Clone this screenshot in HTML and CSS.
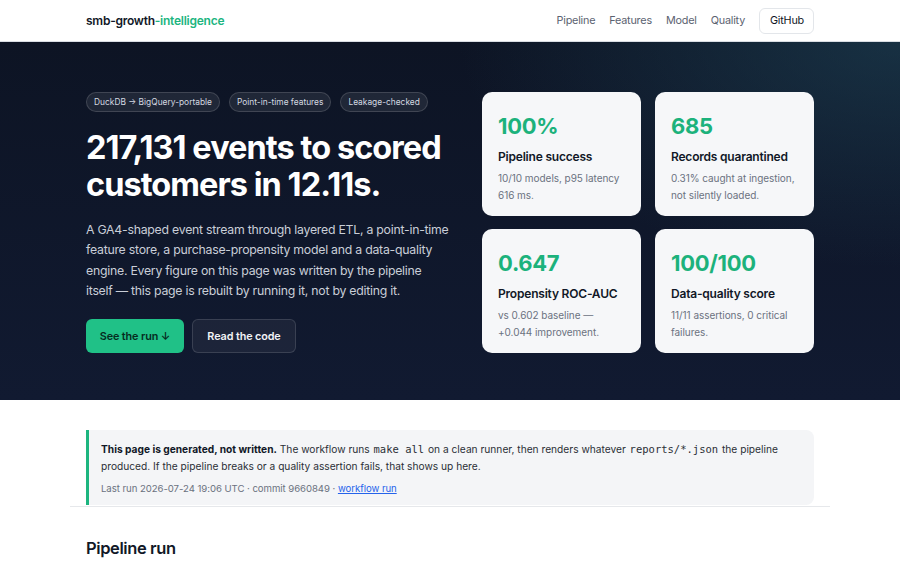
FILE: index.html
```html
<!DOCTYPE html>
<html lang="en">
<head>
<meta charset="utf-8">
<title>smb-growth-intelligence</title>
<link rel="stylesheet" href="styles.css">
</head>
<body>
<header class="topbar">
  <div class="wrap topbar-inner">
    <a class="logo" href="#">smb-growth<span class="accent">-intelligence</span></a>
    <nav class="nav">
      <a href="#">Pipeline</a>
      <a href="#">Features</a>
      <a href="#">Model</a>
      <a href="#">Quality</a>
      <a class="gh" href="#">GitHub</a>
    </nav>
  </div>
</header>

<section class="hero">
  <div class="wrap hero-inner">
    <div class="hero-left">
      <div class="pills">
        <span class="pill">DuckDB → BigQuery-portable</span>
        <span class="pill">Point-in-time features</span>
        <span class="pill">Leakage-checked</span>
      </div>
      <h1 class="title">217,131 events to scored customers in 12.11s.</h1>
      <p class="lead">A GA4-shaped event stream through layered ETL, a <span class="nb">point-in-time</span> feature store, a purchase-propensity model and a <span class="nb">data-quality</span> engine. Every figure on this page was written by the pipeline <span class="nb">itself —</span> this page is rebuilt by running it, not by editing it.</p>
      <div class="actions">
        <a class="btn btn-primary" href="#">See the run ↓</a>
        <a class="btn btn-ghost" href="#">Read the code</a>
      </div>
    </div>
    <div class="cards">
      <div class="card">
        <div class="num">100%</div>
        <div class="card-title">Pipeline success</div>
        <div class="card-desc">10/10 models, p95 latency 616 ms.</div>
      </div>
      <div class="card">
        <div class="num">685</div>
        <div class="card-title">Records quarantined</div>
        <div class="card-desc">0.31% caught at ingestion, not silently loaded.</div>
      </div>
      <div class="card">
        <div class="num">0.647</div>
        <div class="card-title">Propensity ROC-AUC</div>
        <div class="card-desc">vs 0.602 baseline — +0.044 improvement.</div>
      </div>
      <div class="card">
        <div class="num">100/100</div>
        <div class="card-title">Data-quality score</div>
        <div class="card-desc">11/11 assertions, 0 critical failures.</div>
      </div>
    </div>
  </div>
</section>

<section class="notice-sec">
  <div class="notice">
    <p class="notice-text"><strong>This page is generated, not written.</strong> The workflow runs <code>make all</code> on a clean runner, then renders whatever <code>reports/*.json</code> the pipeline produced. If the pipeline breaks or a quality assertion fails, that shows up here.</p>
    <p class="notice-meta">Last run 2026-07-24 19:06 UTC · commit 9660849 · <a href="#">workflow run</a></p>
  </div>
</section>

<section class="wrap run">
  <h2>Pipeline run</h2>
</section>
</body>
</html>
```

FILE: styles.css
```css
* { box-sizing: border-box; }
html, body { margin: 0; padding: 0; }
body {
  font-family: Inter, "Noto Sans", "Liberation Sans", sans-serif;
  color: #111827;
  background: #ffffff;
  -webkit-font-smoothing: antialiased;
}
a { text-decoration: none; color: inherit; }

.wrap {
  max-width: 760px;
  margin: 0 auto;
  padding: 0 16px;
}

/* header */
.topbar {
  height: 42px;
  border-bottom: 1px solid #d9dde3;
  background: #fff;
}
.topbar-inner {
  height: 41px;
  display: flex;
  align-items: center;
  justify-content: space-between;
}
.logo {
  font-size: 12px;
  font-weight: 600;
  letter-spacing: -0.25px;
  color: #111827;
}
.accent { color: #1cb57f; }
.nav {
  display: flex;
  align-items: center;
  gap: 14px;
  font-size: 10.8px;
  letter-spacing: -0.2px;
  color: #5b6270;
}
.gh {
  color: #111827;
  border: 1px solid #e3e6ea;
  border-radius: 6px;
  padding: 0 10px;
  height: 26px;
  line-height: 24px;
  width: 55px;
  text-align: center;
}

/* hero */
.hero {
  background:
    radial-gradient(ellipse 70% 90% at 100% 0%, rgba(32, 72, 92, 0.55), rgba(32, 72, 92, 0) 70%),
    linear-gradient(180deg, #0d1424 0%, #111a31 100%);
  color: #fff;
  height: 358px;
}
.hero-inner {
  height: 100%;
  display: flex;
  align-items: center;
  justify-content: space-between;
  gap: 30px;
  padding-top: 2px;
}
.hero-left { width: 372px; }
.nb { white-space: nowrap; }
.pills {
  display: flex;
  gap: 9px;
  margin-bottom: 17px;
  margin-top: 1px;
}
.pill {
  white-space: nowrap;
  font-size: 8.4px;
  line-height: 18px;
  padding: 0 7px;
  border-radius: 999px;
  background: rgba(255, 255, 255, 0.08);
  border: 1px solid rgba(255, 255, 255, 0.14);
  color: #d4d9e1;
}
.title {
  margin: 0 0 17px;
  font-size: 32.5px;
  line-height: 37px;
  font-weight: 700;
  letter-spacing: -0.95px;
  color: #fff;
}
.lead {
  margin: 0 0 18px;
  font-size: 12.3px;
  line-height: 20.4px;
  letter-spacing: -0.25px;
  color: #c9ced8;
}
.actions { display: flex; gap: 8px; }
.btn {
  display: inline-flex;
  align-items: center;
  justify-content: center;
  height: 34px;
  border-radius: 6px;
  font-size: 10.8px;
  font-weight: 600;
  letter-spacing: -0.1px;
}
.btn-primary {
  width: 98px;
  background: #20c187;
  color: #062c1f;
}
.btn-ghost {
  width: 104px;
  background: rgba(255, 255, 255, 0.05);
  border: 1px solid rgba(255, 255, 255, 0.13);
  color: #f1f3f6;
}

.cards {
  display: grid;
  grid-template-columns: 159px 159px;
  gap: 13px 14px;
}
.card {
  background: #f6f7f9;
  border-radius: 10px;
  height: 124px;
  padding: 21px 16px 0;
  color: #111827;
}
.num {
  font-size: 22px;
  line-height: 26px;
  font-weight: 700;
  color: #1cb27c;
  letter-spacing: -0.3px;
  margin-bottom: 10px;
}
.card-title {
  font-size: 12px;
  font-weight: 600;
  line-height: 16px;
  letter-spacing: -0.2px;
  white-space: nowrap;
  margin-bottom: 5px;
}
.card-desc {
  font-size: 10px;
  line-height: 17px;
  letter-spacing: -0.05px;
  color: #6b7280;
}

/* notice */
.notice-sec {
  max-width: 760px;
  margin: 30px auto 0;
  padding: 0 16px 1px;
  border-bottom: 1px solid #e6e8eb;
}
.notice {
  background: #f4f5f7;
  border-left: 3px solid #1cb57f;
  border-radius: 0 8px 8px 0;
  padding: 11px 14px 10px 12px;
  height: 75px;
}
.notice-text {
  margin: 0 0 7px;
  font-size: 10.2px;
  line-height: 17px;
  color: #2b2f36;
}
.notice-text strong { font-weight: 700; color: #111827; }
.notice-text code {
  font-family: "DejaVu Sans Mono", "Liberation Mono", monospace;
  font-size: 10.5px;
  line-height: 1;
  color: #2b2f36;
  padding: 0 1px;
}
.notice-meta {
  margin: 0;
  font-size: 9.6px;
  line-height: 14px;
  letter-spacing: -0.05px;
  color: #6b7280;
}
.notice-meta a {
  color: #2563eb;
  text-decoration: underline;
}

.run h2 {
  margin: 31px 0 0;
  font-size: 16.5px;
  font-weight: 600;
  letter-spacing: -0.4px;
  color: #111827;
}
```
